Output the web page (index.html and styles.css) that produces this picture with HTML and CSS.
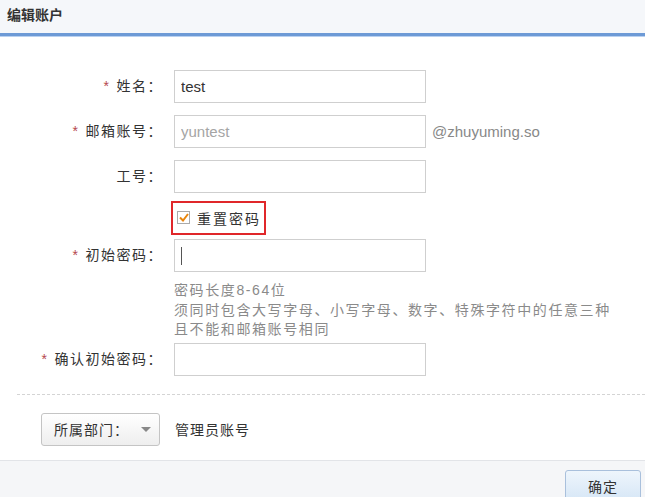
FILE: index.html
```html
<!DOCTYPE html>
<html lang="zh-CN">
<head>
    <meta charset="UTF-8">
    <meta name="viewport" content="width=device-width, initial-scale=1.0">
    <title>编辑账户</title>
    <link rel="stylesheet" href="styles.css">
</head>
<body>
    <div class="dialog">
        <div class="dialog-header">编辑账户</div>

        <div class="dialog-body">
            <!-- 账户信息 -->
            <form class="account-form">
                <label class="form-label" for="name"><span class="req">*</span>姓名：</label>
                <div class="form-field"><input type="text" id="name" value="test"></div>

                <label class="form-label" for="mail"><span class="req">*</span>邮箱账号：</label>
                <div class="form-field">
                    <input type="text" id="mail" placeholder="yuntest">
                    <span class="mail-suffix">@zhuyuming.so</span>
                </div>

                <label class="form-label" for="jobno">工号：</label>
                <div class="form-field"><input type="text" id="jobno"></div>

                <div class="form-label reset-row"></div>
                <div class="form-field reset-row">
                    <label class="reset-box">
                        <span class="check">
                            <svg width="10" height="9" viewBox="0 0 10 9"><path d="M1 4.5 L4 7.5 L9 1" fill="none" stroke="#e8850c" stroke-width="2"/></svg>
                        </span>
                        重置密码
                    </label>
                </div>

                <label class="form-label" for="pwd"><span class="req">*</span>初始密码：</label>
                <div class="form-field"><input type="text" id="pwd" class="has-caret"></div>

                <div class="form-label"></div>
                <div class="form-hint">
                    密码长度8-64位<br>
                    须同时包含大写字母、小写字母、数字、特殊字符中的任意三种<br>
                    且不能和邮箱账号相同
                </div>

                <label class="form-label" for="pwd2"><span class="req">*</span>确认初始密码：</label>
                <div class="form-field"><input type="text" id="pwd2"></div>
            </form>

            <div class="divider"></div>

            <!-- 所属部门 -->
            <div class="dept-row">
                <button class="dept-select">所属部门：<span class="caret"></span></button>
                <span class="dept-name">管理员账号</span>
            </div>
        </div>

        <div class="dialog-footer">
            <button class="btn-ok">确定</button>
        </div>
    </div>
</body>
</html>
```

FILE: styles.css
```css
body {
    margin: 0;
    font-family: "Liberation Sans", "Noto Sans CJK SC", sans-serif;
    font-size: 14px;
    color: #333;
    background: #fff;
    overflow: hidden;
}
.dialog {
    width: 645px;
    height: 497px;
    display: flex;
    flex-direction: column;
}
.dialog-header {
    height: 33px;
    line-height: 30px;
    padding-left: 7px;
    font-weight: bold;
    font-size: 14px;
    color: #333;
    background: #f5f7fa;
    border-bottom: 3px solid #6d9ad6;
    box-shadow: 0 1px 0 #b9d1f0;
}
.dialog-body {
    flex: 1;
}
.account-form {
    display: grid;
    grid-template-columns: 163px 1fr;
    column-gap: 11px;
    row-gap: 12px;
    padding-top: 34px;
}
.form-label {
    height: 33px;
    line-height: 33px;
    text-align: right;
    font-size: 14px;
    color: #333;
    letter-spacing: 1.5px;
}
.req {
    color: #b5474f;
    margin-right: 6px;
}
.form-field {
    display: flex;
    align-items: center;
    height: 33px;
}
.reset-row {
    margin-top: -4px;
    margin-bottom: -7px;
}
input {
    width: 252px;
    height: 33px;
    box-sizing: border-box;
    border: 1px solid #cfcfcf;
    padding: 0 6px;
    font-family: inherit;
    font-size: 15px;
    color: #333;
    outline: none;
}
input::placeholder {
    color: #a5a5a5;
}
.has-caret {
    background: linear-gradient(#555, #555) no-repeat 6px 7px / 1px 18px;
}
.mail-suffix {
    margin-left: 6px;
    color: #888;
    font-size: 15px;
}
.reset-box {
    display: flex;
    align-items: center;
    margin-left: -3px;
    height: 30px;
    padding: 0 3px 0 4px;
    border: 2px solid #e0272a;
    letter-spacing: 2px;
    font-size: 14px;
    color: #333;
}
.check {
    width: 11px;
    height: 11px;
    border: 1px solid #aaa;
    margin-right: 7px;
    display: flex;
    align-items: center;
    justify-content: center;
    background: #fff;
}
.form-hint {
    margin-top: -3px;
    margin-bottom: -9px;
    line-height: 19.5px;
    font-size: 14px;
    letter-spacing: 1.6px;
    color: #8a8a8a;
}
.divider {
    margin: 18px 0 0 17px;
    border-top: 1px dashed #d4d4d4;
}
.dept-row {
    display: flex;
    align-items: center;
    padding: 18px 0 0 41px;
}
.dept-select {
    width: 119px;
    height: 33px;
    border: 1px solid #c4c4c4;
    border-radius: 3px;
    background: linear-gradient(#ffffff, #eeeeee);
    font-family: inherit;
    font-size: 14px;
    letter-spacing: 1px;
    color: #333;
    text-align: left;
    padding-left: 12px;
    display: flex;
    align-items: center;
}
.caret {
    margin-left: 12px;
    border-left: 5px solid transparent;
    border-right: 5px solid transparent;
    border-top: 5px solid #888;
}
.dept-name {
    margin-left: 15px;
    letter-spacing: 1px;
}
.dialog-footer {
    box-sizing: border-box;
    height: 37px;
    background: #f5f6f8;
    border-top: 1px solid #e2e4e8;
    display: flex;
    justify-content: flex-end;
    align-items: flex-start;
    padding-top: 9px;
}
.btn-ok {
    flex: none;
    width: 76px;
    height: 32px;
    margin-right: 4px;
    border: 1px solid #a9c0dc;
    border-radius: 3px;
    background: linear-gradient(#eef5fc, #d6e6f6);
    font-family: inherit;
    font-size: 14px;
    letter-spacing: 1px;
    color: #333;
}
```
